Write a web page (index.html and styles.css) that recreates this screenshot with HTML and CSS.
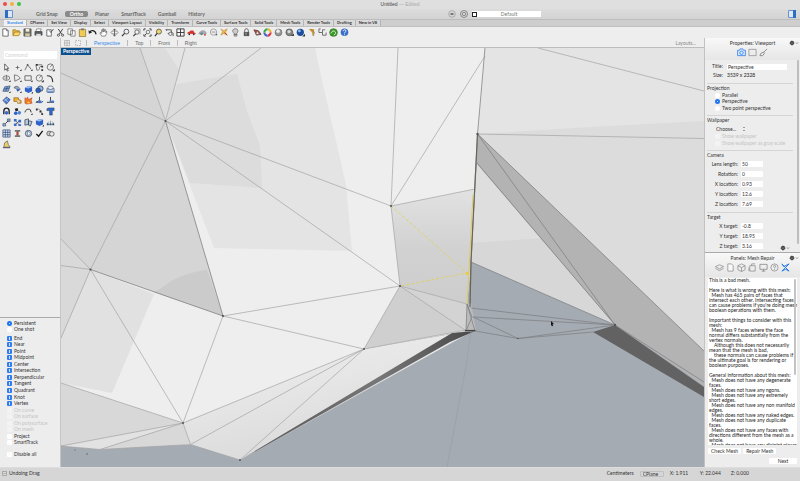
FILE: index.html
```html
<!DOCTYPE html>
<html lang="en">
<head>
<meta charset="utf-8">
<title>Untitled — Edited</title>
<link rel="stylesheet" href="styles.css">
</head>
<body>
<svg class="defs" aria-hidden="true">
  <symbol id="file" viewBox="0 0 10 10"><path d="M2 1h4l2 2v6H2z" fill="#fff" stroke="#555" stroke-width=".9"/><path d="M6 1v2h2" fill="none" stroke="#555" stroke-width=".8"/></symbol>
  <symbol id="folder" viewBox="0 0 10 10"><path d="M1 8V2h3l1 1h3v2" fill="#e9b93c" stroke="#8a6a1c" stroke-width=".7"/><path d="M1 8.500l2-4h6.500l-2 4z" fill="#ffd867" stroke="#8a6a1c" stroke-width=".7"/></symbol>
  <symbol id="save" viewBox="0 0 10 10"><path d="M1 1h8v8H1z" fill="#76736a" stroke="#444" stroke-width=".7"/><path d="M3 1h4v3H3z" fill="#f6f1dc"/><path d="M2.500 6h5v3h-5z" fill="#cfc9a8"/></symbol>
  <symbol id="print" viewBox="0 0 10 10"><path d="M3 1h5l-1 3H2z" fill="#fff" stroke="#444" stroke-width=".6"/><path d="M1 4h8v4H1z" fill="#5b5f63" stroke="#333" stroke-width=".6"/><path d="M2.500 6.500h5v2.500h-5z" fill="#ddd"/></symbol>
  <symbol id="filecheck" viewBox="0 0 10 10"><path d="M2 2h5v7H2z" fill="#fff" stroke="#555" stroke-width=".9"/><path d="M5 3l1.500 2L9.500 1" fill="none" stroke="#555" stroke-width="1"/></symbol>
  <symbol id="cut" viewBox="0 0 10 10"><path d="M2.500 1l4 6M7.500 1l-4 6" stroke="#333" fill="none"/><circle cx="2.700" cy="8" r="1.200" fill="none" stroke="#333" stroke-width=".8"/><circle cx="7.300" cy="8" r="1.200" fill="none" stroke="#333" stroke-width=".8"/></symbol>
  <symbol id="copy" viewBox="0 0 10 10"><path d="M1 1h5v6H1zM4 3h5v6H4z" fill="#fff" stroke="#666" stroke-width=".8"/></symbol>
  <symbol id="paste" viewBox="0 0 10 10"><path d="M1.500 1.500h7v8h-7z" fill="#f2cb55" stroke="#8b7838" stroke-width=".8"/><path d="M3.500.500h3v2h-3z" fill="#777"/></symbol>
  <symbol id="undo" viewBox="0 0 10 10"><path d="M2 5c1-3 6-3 7 2" fill="none" stroke="#222" stroke-width="1.300"/><path d="M.500 2.500l.500 4 3.500-1.500z" fill="#222"/></symbol>
  <symbol id="hand" viewBox="0 0 10 10"><path d="M3 9L1 5.500l1-.500 1 1V2l1-.500.500 3V1h1v3.500L6.500 1.500l1 .500v3l1-1.500V6L7 9z" fill="#fff" stroke="#555" stroke-width=".7"/></symbol>
  <symbol id="rotate" viewBox="0 0 10 10"><ellipse cx="5" cy="5" rx="4" ry="1.800" fill="none" stroke="#777" stroke-width=".8"/><path d="M5 1v8M3.500 2.500L5 1l1.500 1.500M3.500 7.500L5 9l1.500-1.500" fill="none" stroke="#444" stroke-width=".8"/></symbol>
  <symbol id="zoom" viewBox="0 0 10 10"><circle cx="6" cy="4" r="2.700" fill="#e8eef5" stroke="#444" stroke-width=".9"/><path d="M4 6L1 9" stroke="#333" stroke-width="1.300"/></symbol>
  <symbol id="zoomwin" viewBox="0 0 10 10"><path d="M2 1h7v6" fill="none" stroke="#777" stroke-width=".7"/><circle cx="5.500" cy="4.500" r="2.400" fill="#f3f3f3" stroke="#444" stroke-width=".8"/><path d="M4 6.500L1.500 9" stroke="#333" stroke-width="1.200"/></symbol>
  <symbol id="zoomext" viewBox="0 0 10 10"><path d="M1 3V1h2M7 1h2v2M9 7v2H7M3 9H1V7" fill="none" stroke="#333" stroke-width="1"/><circle cx="5.500" cy="4.500" r="2" fill="#eee" stroke="#555" stroke-width=".8"/><path d="M4 6L2 8" stroke="#333"/></symbol>
  <symbol id="zoomsel" viewBox="0 0 10 10"><circle cx="5.500" cy="4" r="2.800" fill="#eed56a" stroke="#555" stroke-width=".9"/><path d="M3.500 6L1 9" stroke="#333" stroke-width="1.300"/></symbol>
  <symbol id="viewback" viewBox="0 0 10 10"><path d="M1 2h6v4H3M7 4l2 2v3M1 2l1-1M1 2l1 1" fill="none" stroke="#444" stroke-width=".9"/><circle cx="6" cy="6.500" r="1.800" fill="#eee" stroke="#444" stroke-width=".7"/></symbol>
  <symbol id="views" viewBox="0 0 10 10"><path d="M1 1h8v8H1zM5 1v8M1 5h8" fill="#f7f7f7" stroke="#333" stroke-width="1"/></symbol>
  <symbol id="carred" viewBox="0 0 10 10"><path d="M.500 6.500V5L3 4l1-1.200h3L8 5l1.500.500v1.200z" fill="#d7332d"/><circle cx="2.500" cy="7" r="1" fill="#333"/><circle cx="7.500" cy="7" r="1" fill="#333"/></symbol>
  <symbol id="car" viewBox="0 0 10 10"><path d="M1 5.500l3-2.500h3l2 2v1.500H1z" fill="#aab" stroke="#888" stroke-width=".5"/><circle cx="4" cy="6.500" r="1.600" fill="#678c78"/><circle cx="7.700" cy="7.500" r="1" fill="#b44"/></symbol>
  <symbol id="circle" viewBox="0 0 10 10"><circle cx="5" cy="4.500" r="3.500" fill="#eee" stroke="#888" stroke-width=".8"/><path d="M3 4.500h4" stroke="#777" stroke-width=".8"/><path d="M7 8h2V6z" fill="#444"/></symbol>
  <symbol id="spark" viewBox="0 0 10 10"><path d="M1 1l3 2 4-2-2 4 2 3-4-2-3 2 2-4z" fill="#f0c23d" stroke="#a6702d" stroke-width=".5"/><path d="M5 5l3 3" stroke="#c33"/></symbol>
  <symbol id="bulb" viewBox="0 0 10 10"><path d="M3.500 6C0 3 3 .500 5 .800 8 1 8.500 3.500 6.500 6v3h-3z" fill="#ccc" stroke="#666" stroke-width=".8"/><path d="M3.500 7h3" stroke="#555"/></symbol>
  <symbol id="lock" viewBox="0 0 10 10"><path d="M3 5V3c0-3 4-3 4 0v2" fill="none" stroke="#555"/><path d="M2 4.500h6V9H2z" fill="#555"/><path d="M4 5h1v3H4z" fill="#aaa"/></symbol>
  <symbol id="layer" viewBox="0 0 10 10"><path d="M1 2l5 1 3 4-5 1z" fill="#d44335" stroke="#333" stroke-width=".7"/><path d="M3 7l2-4 2 4z" fill="#eee" stroke="#444" stroke-width=".5"/></symbol>
  <symbol id="wheel" viewBox="0 0 10 10"><g fill="none" stroke-width="2.200"><path d="M5 1.500A3.500 3.500 0 0 1 8.500 5" stroke="#f0b32c"/><path d="M8.500 5A3.500 3.500 0 0 1 5 8.500" stroke="#d34"/><path d="M5 8.500A3.500 3.500 0 0 1 1.500 5" stroke="#46c"/><path d="M1.500 5A3.500 3.500 0 0 1 5 1.500" stroke="#3a5"/></g></symbol>
  <symbol id="sphere" viewBox="0 0 10 10"><circle cx="5" cy="5" r="3.800" fill="#999" stroke="#555" stroke-width=".6"/><circle cx="4.500" cy="3.500" r="2" fill="#eee"/></symbol>
  <symbol id="sphered" viewBox="0 0 10 10"><circle cx="4.800" cy="4.800" r="3.800" fill="#888" stroke="#444" stroke-width=".7"/><circle cx="4.500" cy="4" r="1.800" fill="#ddd"/><path d="M6 9h4V6z" fill="#444"/></symbol>
  <symbol id="sphereb" viewBox="0 0 10 10"><circle cx="4.800" cy="4.800" r="4" fill="#1d4d9e"/><circle cx="3.800" cy="3.200" r="1.500" fill="#8fc0ee"/><path d="M7 9.500h3V6.500z" fill="#333"/></symbol>
  <symbol id="flag" viewBox="0 0 10 10"><path d="M2 1h6v4L6 9l-.500-4z" fill="#d9a03a"/><path d="M4 1l4 4-1 4" fill="none" stroke="#665" stroke-width=".8"/></symbol>
  <symbol id="dims" viewBox="0 0 10 10"><path d="M1 1v4h4V2h3M5 5v3h4V5M1 1h2" fill="none" stroke="#555" stroke-width=".9"/></symbol>
  <symbol id="green" viewBox="0 0 10 10"><circle cx="5" cy="5" r="4.300" fill="#3c9b2b" stroke="#26601c" stroke-width=".6"/><path d="M2 6c2-4 5-3 5.500 0l-2 2" fill="none" stroke="#e9f6dc" stroke-width="1"/></symbol>
  <symbol id="help" viewBox="0 0 10 10"><circle cx="5" cy="4.800" r="4.200" fill="#3b6fc9"/><path d="M3.500 3.500c0-2 3.500-2 3 0C6.500 4.500 5 4.500 5 6M5 7v1" fill="none" stroke="#fff" stroke-width="1"/></symbol>

  <symbol id="arrow" viewBox="0 0 10 10"><path d="M3 1v7l1.500-1.500L6 9l1-.500L5.500 6h2z" fill="#fff" stroke="#333" stroke-width=".8"/></symbol>
  <symbol id="point" viewBox="0 0 10 10"><path d="M3 5h4M5 3v4" stroke="#555" stroke-width=".8"/><path d="M7.500 9h2V7z" fill="#222"/></symbol>
  <symbol id="poly" viewBox="0 0 10 10"><path d="M1 8l3-6 4 5" fill="none" stroke="#444" stroke-width=".8"/><circle cx="4" cy="2" r="1" fill="#555"/><path d="M7.500 9h2V7z" fill="#222"/></symbol>
  <symbol id="curve" viewBox="0 0 10 10"><path d="M1 2h7M2 8c6 0 0-5 6-4M1 2l1 6" fill="none" stroke="#555" stroke-width=".8"/><path d="M1 1h2v2H1zM7 3h2v2H7zM7 7h2v2H7z" fill="#333"/></symbol>
  <symbol id="circ" viewBox="0 0 10 10"><circle cx="4.800" cy="4.500" r="3.500" fill="none" stroke="#555" stroke-width=".8"/><path d="M4.500 4.500l3-3M7.500 9h2V7z" fill="#222" stroke="#444" stroke-width=".6"/></symbol>
  <symbol id="ellipse" viewBox="0 0 10 10"><ellipse cx="4.800" cy="4.500" rx="3.800" ry="2.500" fill="none" stroke="#555" stroke-width=".8"/><path d="M2.500 4.500h4M5 1v6" stroke="#555" stroke-width=".6"/><path d="M7.500 9h2V7z" fill="#222"/></symbol>
  <symbol id="arc" viewBox="0 0 10 10"><path d="M2 8l-.500-7C5 1 8 4 8 5L2 8" fill="none" stroke="#555" stroke-width=".8"/><path d="M7.500 9h2V7z" fill="#222"/></symbol>
  <symbol id="rect" viewBox="0 0 10 10"><path d="M1 2h7v5H1z" fill="none" stroke="#555" stroke-width=".9"/><path d="M7.500 9h2V7z" fill="#222"/></symbol>
  <symbol id="fillet" viewBox="0 0 10 10"><path d="M1 2c4 0 6 1 6.500 7" fill="none" stroke="#333" stroke-width="1.200"/></symbol>
  <symbol id="surf" viewBox="0 0 10 10"><path d="M1 7l2-5 6-1-2 6z" fill="#7ea6e6" stroke="#345" stroke-width=".7"/><path d="M2 4.500l6-1M4 7l2-5" stroke="#235" stroke-width=".6"/><path d="M7.500 9h2V7z" fill="#222"/></symbol>
  <symbol id="rev" viewBox="0 0 10 10"><path d="M1 3c3-3 6-1 7 2L5 7C5 5 4 4 1 3z" fill="#9ab" stroke="#456" stroke-width=".7"/><circle cx="5.500" cy="5.500" r="1.300" fill="#36c"/><path d="M7.500 9h2V7z" fill="#222"/></symbol>
  <symbol id="box" viewBox="0 0 10 10"><path d="M1 3l4-2 4 1v5L5 9 1 7z" fill="#2f62c9"/><path d="M1 3l4-2 4 1-4 2z" fill="#9bbcf2"/><path d="M8 9.500h2v-2z" fill="#222"/></symbol>
  <symbol id="spheres" viewBox="0 0 10 10"><circle cx="6" cy="4" r="3" fill="#8eb2ec" stroke="#234" stroke-width=".8"/><circle cx="3.500" cy="6" r="2.700" fill="#2d5dbd" stroke="#234" stroke-width=".6"/></symbol>
  <symbol id="cyl" viewBox="0 0 10 10"><path d="M1 4h8v4H1z" fill="#b9cdec" stroke="#456" stroke-width=".7"/><ellipse cx="5" cy="3" rx="3" ry="2" fill="#e4ecf9" stroke="#456" stroke-width=".7"/><path d="M2 8h6" stroke="#36b"/></symbol>
  <symbol id="plane" viewBox="0 0 10 10"><path d="M1 5l4-4 4 3-4 5z" fill="#4c7fd8" stroke="#235" stroke-width=".7"/><path d="M2 6l5-4M3 3l4 4" stroke="#cde" stroke-width=".7"/></symbol>
  <symbol id="puzzle" viewBox="0 0 10 10"><path d="M1 2h5v2l3 1v3H5V6L1 6z" fill="#f5b32e" stroke="#7b571a" stroke-width=".7"/><circle cx="6" cy="6" r="1.300" fill="#ddd"/></symbol>
  <symbol id="burst" viewBox="0 0 10 10"><path d="M1 2l2 1 1-2 1 3 4-2-1 3 1 3-3 .500L3 9 1 8z" fill="#ee7b22" stroke="#a33" stroke-width=".5"/><path d="M3 8l2-2 2 2z" fill="#ffd35c"/></symbol>
  <symbol id="trim" viewBox="0 0 10 10"><path d="M5 1v4L1 7h6l2-1" fill="none" stroke="#345" stroke-width="1"/><path d="M4 5h3v3H4z" fill="#3c70ce"/></symbol>
  <symbol id="split" viewBox="0 0 10 10"><path d="M5 1v5M1 7h8" stroke="#333"/><path d="M4 5h5v2H4z" fill="#477dce"/></symbol>
  <symbol id="join" viewBox="0 0 10 10"><path d="M2 8V5c0-5 6-5 6 0v3" fill="none" stroke="#222" stroke-width="1.500"/><circle cx="5" cy="6.500" r="2" fill="#3669c9"/></symbol>
  <symbol id="group" viewBox="0 0 10 10"><path d="M2 2l3-1 1 3-3 1z" fill="#222"/><circle cx="3" cy="7" r="2" fill="#2d61c4"/><circle cx="7" cy="6.500" r="2" fill="#4b83df"/></symbol>
  <symbol id="bend" viewBox="0 0 10 10"><path d="M1 6c1-4 4-4 6-3l1 3" fill="none" stroke="#333" stroke-width="1.100"/><path d="M7.500 9h2V7z" fill="#222"/></symbol>
  <symbol id="offset" viewBox="0 0 10 10"><path d="M1 2c5 0 6 2 7 6" fill="none" stroke="#888"/><path d="M1 2h2v2H1zM5 4h2v2H5zM7 7h2v2H7z" fill="#333"/></symbol>
  <symbol id="textt" viewBox="0 0 10 10"><path d="M1 2l2-1h6v3H7v5H4V4H1z" fill="#2f68cf" stroke="#234" stroke-width=".5"/></symbol>
  <symbol id="move" viewBox="0 0 10 10"><path d="M1 6h3v3H1zM6 1h3v3H6z" fill="#88a6d6" stroke="#345" stroke-width=".6"/><path d="M4 6l3-3" stroke="#333"/></symbol>
  <symbol id="array" viewBox="0 0 10 10"><path d="M1 1h3v3H1zM6 2h3v3H6zM1 6h3v3H1zM6 7h3v2H6z" fill="#3b6cc8"/><path d="M3 3l4 5M7 3L3 7" stroke="#345" stroke-width=".7"/></symbol>
  <symbol id="cubes" viewBox="0 0 10 10"><path d="M1 2l4-1v6L1 8zM5 3l4 1-2 5-2-1z" fill="#b9c7da" stroke="#345" stroke-width=".8"/></symbol>
  <symbol id="dots" viewBox="0 0 10 10"><path d="M1 7h8M1 7l2-3M5 7V3M9 7L7 4" stroke="#678" stroke-width=".7"/><path d="M1 6h2v2H1zM4 6h2v2H4zM7 6h2v2H7z" fill="#357"/></symbol>
  <symbol id="gridi" viewBox="0 0 10 10"><path d="M1 1h8v8H1zM3.700 1v8M6.400 1v8M1 3.700h8M1 6.400h8" fill="#d8e3f5" stroke="#334b78" stroke-width=".8"/></symbol>
  <symbol id="beam" viewBox="0 0 10 10"><path d="M2 1h6v2H6v4h2v2H2V7h2V3H2z" fill="#777"/><path d="M4 3h2v4H4z" fill="#b8463b"/></symbol>
  <symbol id="ring" viewBox="0 0 10 10"><circle cx="5" cy="5" r="3.500" fill="#b9cbe6" stroke="#345" stroke-width=".8"/><path d="M4 2v6l3-3z" fill="#fff" stroke="#345" stroke-width=".5"/></symbol>
  <symbol id="check" viewBox="0 0 10 10"><path d="M1.500 5.500L4 8l4.500-6" fill="none" stroke="#111" stroke-width="1.400"/></symbol>
  <symbol id="shells" viewBox="0 0 10 10"><circle cx="3.500" cy="5" r="2.600" fill="#ccc" stroke="#444" stroke-width=".8"/><circle cx="6.500" cy="5.500" r="2.500" fill="#eee" stroke="#444" stroke-width=".8"/></symbol>
  <symbol id="rhino" viewBox="0 0 10 10"><path d="M2 8l1-5 3-2 1 4 2 3z" fill="#ead06a" stroke="#555" stroke-width=".7"/><path d="M1 8.500h8" stroke="#557" stroke-width="1.200"/></symbol>

  <symbol id="camera" viewBox="0 0 10 10"><path d="M.700 2.500h2L3.500 1h3l.800 1.500h2v6H.700z" fill="#dcebff" stroke="#2d7be5" stroke-width=".9"/><circle cx="5" cy="5.300" r="1.900" fill="none" stroke="#2d7be5" stroke-width=".9"/></symbol>
  <symbol id="frame" viewBox="0 0 10 10"><path d="M1 1.500h8v7H1z" fill="none" stroke="#8a8a8a" stroke-width=".8"/></symbol>
  <symbol id="brush" viewBox="0 0 10 10"><path d="M9 1L5 5M2 6l3-1.500L6 6 4 8.500H1z" fill="none" stroke="#888" stroke-width="1"/></symbol>
  <symbol id="layers" viewBox="0 0 10 10"><path d="M.500 4L5 2l4.500 2L5 6.500zM.500 6L5 8.500 9.500 6" fill="none" stroke="#888" stroke-width=".8"/></symbol>
  <symbol id="page" viewBox="0 0 10 10"><path d="M2 1h4l2 2v6H2z" fill="#f8f8f8" stroke="#888" stroke-width=".8"/></symbol>
  <symbol id="cube" viewBox="0 0 10 10"><path d="M1 3l4-2 4 2v4.500l-4 2-4-2zM1 3l4 2 4-2M5 5v4.500" fill="none" stroke="#888" stroke-width=".8"/></symbol>
  <symbol id="stack" viewBox="0 0 10 10"><path d="M2 3h6v6H2zM4 3V1h4M1 9V5" fill="none" stroke="#888" stroke-width=".8"/></symbol>
  <symbol id="monitor" viewBox="0 0 10 10"><path d="M1 1.500h8v5.500H1zM3 9h4M5 7v2" fill="none" stroke="#888" stroke-width=".9"/></symbol>
  <symbol id="qmark" viewBox="0 0 10 10"><circle cx="5" cy="5" r="4" fill="none" stroke="#888" stroke-width=".8"/><path d="M3.800 4c0-2 2.800-1.500 2.400 0L5 5.500v.500M5 7v.800" fill="none" stroke="#777" stroke-width=".8"/></symbol>
  <symbol id="mesh" viewBox="0 0 10 10"><path d="M1 1l8 8M9 1L1 9M1 1l2 3 6-3M1 9l4-2 4 2" fill="none" stroke="#2d7be5" stroke-width="1.100"/></symbol>
  <symbol id="gear" viewBox="0 0 10 6"><circle cx="3" cy="3" r="1.900" fill="#333" stroke="#333" stroke-width="1" stroke-dasharray=".8 .7"/><circle cx="3" cy="3" r=".6" fill="#eee"/><path d="M7 2.500l1 1 1-1" fill="none" stroke="#555" stroke-width=".7"/></symbol>
</svg>

<header class="titlebar">
  <div class="lights"><i class="red"></i><i class="amber"></i><i class="green"></i></div>
  <h1>Untitled <span>— Edited</span></h1>
</header>
<div class="modes">
  <button class="side" aria-label="Left sidebar"><svg viewBox="0 0 8 8"><path d="M.500.500h7v7h-7z" fill="#dce8f8" stroke="#6c93c8"/><path d="M0 0h3v8H0z" fill="#2b6fc4"/></svg></button>
  <nav class="modelist">
    <button>Grid Snap</button><button class="on">Ortho</button><button>Planar</button><button>SmartTrack</button><button>Gumball</button><button>History</button>
  </nav>
  <div class="layerbar">
    <svg class="ring" viewBox="0 0 8 8"><circle cx="4" cy="4" r="3.300" fill="none" stroke="#999" stroke-width=".7"/><path d="M2.500 3h3v2h-3z" fill="#777"/></svg>
    <svg class="ring" viewBox="0 0 8 8"><circle cx="4" cy="4" r="3.500" fill="none" stroke="#777" stroke-width=".8"/><circle cx="4" cy="4" r="1.700" fill="none" stroke="#777" stroke-width=".8"/></svg>
    <div class="layersel"><i></i><select aria-label="Layer"><option>Default</option></select></div>
  </div>
  <button class="side" aria-label="Right sidebar"><svg viewBox="0 0 8 8"><path d="M.500.500h7v7h-7z" fill="#dce8f8" stroke="#6c93c8"/><path d="M5 0h3v8H5z" fill="#2b6fc4"/></svg></button>
</div>
<nav class="tabs">
  <button class="on">Standard</button><button>CPlanes</button><button>Set View</button><button>Display</button><button>Select</button><button>Viewport Layout</button><button>Visibility</button><button>Transform</button><button>Curve Tools</button><button>Surface Tools</button><button>Solid Tools</button><button>Mesh Tools</button><button>Render Tools</button><button>Drafting</button><button>New in V8</button>
</nav>
<div class="tools">
  <div class="toolrow">
    <button aria-label="New"><svg><use href="#file"/></svg></button>
    <button aria-label="Open"><svg><use href="#folder"/></svg></button>
    <button aria-label="Save"><svg><use href="#save"/></svg></button>
    <button aria-label="Print"><svg><use href="#print"/></svg></button>
    <button aria-label="Document properties"><svg><use href="#filecheck"/></svg></button>
    <button aria-label="Cut"><svg><use href="#cut"/></svg></button>
    <button aria-label="Copy"><svg><use href="#copy"/></svg></button>
    <button aria-label="Paste"><svg><use href="#paste"/></svg></button>
    <button aria-label="Undo"><svg><use href="#undo"/></svg></button>
    <button aria-label="Pan"><svg><use href="#hand"/></svg></button>
    <button aria-label="Rotate view"><svg><use href="#rotate"/></svg></button>
    <button aria-label="Zoom"><svg><use href="#zoom"/></svg></button>
    <button aria-label="Zoom window"><svg><use href="#zoomwin"/></svg></button>
    <button aria-label="Zoom extents"><svg><use href="#zoomext"/></svg></button>
    <button aria-label="Zoom selected"><svg><use href="#zoomsel"/></svg></button>
    <button aria-label="Undo view"><svg><use href="#viewback"/></svg></button>
    <button aria-label="Viewports"><svg><use href="#views"/></svg></button>
    <button aria-label="Right view"><svg><use href="#carred"/></svg></button>
    <button aria-label="Named view"><svg><use href="#car"/></svg></button>
    <button aria-label="Construction plane"><svg><use href="#circle"/></svg></button>
    <button aria-label="Object snap"><svg><use href="#spark"/></svg></button>
    <button aria-label="Hide"><svg><use href="#bulb"/></svg></button>
    <button aria-label="Lock"><svg><use href="#lock"/></svg></button>
    <button aria-label="Layers"><svg><use href="#layer"/></svg></button>
    <button aria-label="Colors"><svg><use href="#wheel"/></svg></button>
    <button aria-label="Shade"><svg><use href="#sphere"/></svg></button>
    <button aria-label="Shaded viewport"><svg><use href="#sphered"/></svg></button>
    <button aria-label="Render"><svg><use href="#sphereb"/></svg></button>
    <button aria-label="Spotlight"><svg><use href="#flag"/></svg></button>
    <button aria-label="Dimension"><svg><use href="#dims"/></svg></button>
    <button aria-label="Grasshopper"><svg><use href="#green"/></svg></button>
    <button aria-label="Help"><svg><use href="#help"/></svg></button>
  </div>
</div>

<main>
  <aside class="left">
    <input class="command" type="text" placeholder="Command" aria-label="Command">
    <div class="palette">
      <button aria-label="Select"><svg><use href="#arrow"/></svg></button><button aria-label="Point"><svg><use href="#point"/></svg></button><button aria-label="Polyline"><svg><use href="#poly"/></svg></button><button aria-label="Curve"><svg><use href="#curve"/></svg></button><button aria-label="Circle"><svg><use href="#circ"/></svg></button>
      <button aria-label="Ellipse"><svg><use href="#ellipse"/></svg></button><button aria-label="Arc"><svg><use href="#arc"/></svg></button><button aria-label="Rectangle"><svg><use href="#rect"/></svg></button><button aria-label="Polygon"><svg><use href="#circ"/></svg></button><button aria-label="Fillet"><svg><use href="#fillet"/></svg></button>
      <button aria-label="Surface"><svg><use href="#surf"/></svg></button><button aria-label="Revolve"><svg><use href="#rev"/></svg></button><button aria-label="Box"><svg><use href="#box"/></svg></button><button aria-label="Boolean"><svg><use href="#spheres"/></svg></button><button aria-label="Cylinder"><svg><use href="#cyl"/></svg></button>
      <button aria-label="Mesh plane"><svg><use href="#plane"/></svg></button><button aria-label="Join"><svg><use href="#puzzle"/></svg></button><button aria-label="Explode"><svg><use href="#burst"/></svg></button><button aria-label="Trim"><svg><use href="#trim"/></svg></button><button aria-label="Split"><svg><use href="#split"/></svg></button>
      <button aria-label="Group"><svg><use href="#join"/></svg></button><button aria-label="Ungroup"><svg><use href="#group"/></svg></button><button aria-label="Bend"><svg><use href="#bend"/></svg></button><button aria-label="Edit points"><svg><use href="#offset"/></svg></button><button aria-label="Text"><svg><use href="#textt"/></svg></button>
      <button aria-label="Move"><svg><use href="#move"/></svg></button><button aria-label="Array"><svg><use href="#array"/></svg></button><button aria-label="Rotate"><svg><use href="#cubes"/></svg></button><button aria-label="Scale"><svg><use href="#box"/></svg></button><button aria-label="Align"><svg><use href="#dots"/></svg></button>
      <button aria-label="Grid"><svg><use href="#gridi"/></svg></button><button aria-label="Section"><svg><use href="#beam"/></svg></button><button aria-label="Block"><svg><use href="#ring"/></svg></button><button aria-label="Check"><svg><use href="#check"/></svg></button><button aria-label="Shell"><svg><use href="#shells"/></svg></button>
      <button aria-label="Rhino"><svg><use href="#rhino"/></svg></button>
    </div>
    <form class="osnap">
      <div class="pair">
        <label><input type="radio" name="snap" checked>Persistent</label>
        <label><input type="radio" name="snap">One shot</label>
      </div>
      <div class="snaps">
        <label><input type="checkbox" checked>End</label>
        <label><input type="checkbox" checked>Near</label>
        <label><input type="checkbox" checked>Point</label>
        <label><input type="checkbox" checked>Midpoint</label>
        <label><input type="checkbox" checked>Center</label>
        <label><input type="checkbox" checked>Intersection</label>
        <label><input type="checkbox" checked>Perpendicular</label>
        <label><input type="checkbox" checked>Tangent</label>
        <label><input type="checkbox" checked>Quadrant</label>
        <label><input type="checkbox" checked>Knot</label>
        <label><input type="checkbox" checked>Vertex</label>
        <label class="off"><input type="checkbox" disabled>On curve</label>
        <label class="off"><input type="checkbox" disabled>On surface</label>
        <label class="off"><input type="checkbox" disabled>On polysurface</label>
        <label class="off"><input type="checkbox" disabled>On mesh</label>
        <label><input type="checkbox">Project</label>
        <label><input type="checkbox">SmartTrack</label>
      </div>
      <label><input type="checkbox">Disable all</label>
    </form>
  </aside>

  <section class="center">
    <nav class="views">
      <svg viewBox="0 0 6 6"><path d="M.500.500h5v5h-5zM3 0v6M0 3h6" fill="none" stroke="#aaa" stroke-width=".7"/></svg>
      <svg viewBox="0 0 6 6"><path d="M.500.500h5v5h-5z" fill="none" stroke="#aaa" stroke-width=".8" stroke-dasharray="1.500 1"/></svg>
      <button class="on">Perspective</button><button>Top</button><button>Front</button><button>Right</button>
      <button class="layouts">Layouts...</button>
    </nav>
    <div class="viewport">
      <svg class="scene" viewBox="61 48 643 419" preserveAspectRatio="xMidYMid slice" role="img" aria-label="Mesh model">
        <defs>
          <linearGradient id="quad" x1="0" y1="0" x2="0" y2="1"><stop offset="0" stop-color="#e2e2e2"/><stop offset=".5" stop-color="#d2d2d2"/><stop offset="1" stop-color="#cdcdcd"/></linearGradient>
          <linearGradient id="under" x1="0" y1="0" x2=".5" y2="1"><stop offset="0" stop-color="#efefef"/><stop offset=".5" stop-color="#e6e6e6"/><stop offset="1" stop-color="#d8d8d8"/></linearGradient>
          <linearGradient id="edge" gradientUnits="userSpaceOnUse" x1="240" y1="460" x2="475" y2="331"><stop offset="0" stop-color="#555"/><stop offset=".6" stop-color="#777"/><stop offset="1" stop-color="#4a4a4a"/></linearGradient>
        </defs>
        <path fill="#a5abb3" d="M61 48h643v419H61z"/>
        <path fill="#eee" d="M61 48h424l-7 86-7 128-4 42-1 27-101 18-174 96-130 1z"/>
        <path fill="#e4e4e4" d="M160 48h155l8 37 14 60 9 40 6 66-138-3-49-127z"/>
        <path fill="#dcdcdc" d="M165.500 121L177 84l60-10 10 37 13 35 2 42-72-5z"/>
        <path fill="#d5d5d5" d="M61 48h79l25.500 73L223 316 90.500 269.500 61 265z"/>
        <path fill="#dcdcdc" d="M140 48h25l14 22-13.500 51z"/>
        <path fill="#cbcbcb" d="M160 289c12-10 25-16 47-19l16 46-70-24z"/>
        <path fill="#e1e1e1" d="M61 239l29.500 30.500L154 294l-42 99-51-10z"/>
        <path fill="#d9d9d9" d="M61 239l29.500 30.500L61 338z"/>
        <path fill="#d8d8d8" d="M61 383l122 40 7.500 21.500-90.500 5-39-3.500z"/>
        <path fill="#e2e2e2" d="M61 446l122-23-83 26z"/>
        <path fill="url(#under)" d="M183 423l181-74 111-19-235 130-49.500-15.500z"/>
        <path fill="#cfcfcf" d="M400 286l66 44-102 19z"/>
        <path fill="url(#quad)" d="M391 206l84-17-4 73-4 42-67-18z"/>
        <path fill="#d3d3d3" d="M400 286l67 18-1 27z"/>
        <path fill="#e4e4e4" d="M485 48h219v90.500L477.500 134z"/>
        <path fill="#dcdcdc" d="M477.500 134L590 127l114-6v231z"/>
        <path fill="#d7d7d7" d="M477 163l138 162-144-63z"/>
        <path fill="#dedede" d="M477 163l67 75-72 5z"/>
        <path fill="#b3b3b3" d="M477.500 134L704 351v35l-89-61-138-161z"/>
        <path fill="#626262" d="M615 325l89 62v10l-111-65z"/>
        <path fill="url(#edge)" d="M240 460L452 333l23-2-25 11z"/>
        <path fill="#bbb" d="M467 304l4-2 5 29-10 0z"/>
        <g fill="none" stroke="#a3a4a5" stroke-width=".7">
          <path d="M140 48l25.500 73L185 48M261 48l-95.500 73L61 73M90.500 269.500l75-148.500L391 206M165.500 121L400 286"/>
          <path d="M61 239l29.500 30.500L61 265.500M61 338l29.500-68.500L183 423 61 383M61 446l122-23-83 26.500M183 423l7.500 21.500"/>
          <path d="M183 423l40-107 141 33zM223 316l177-30-36 63 102-19M190.500 444.500L364 349 240 460"/>
          <path d="M398 48l-7 158 94-150M391 206l84-17M391 206l9 80 67 18M400 286l65 44"/>
          <path d="M538 48l166 43M477.500 134l226.500 4.500M61 446l39 3.500 90.500-5L240 460"/>
        </g>
        <g fill="none" stroke="#808387" stroke-width=".8">
          <path d="M165.500 121L223 316 90.500 269.500M477.500 134L704 351M477.500 134L615 325 477 163M471 262l144 63 89 57"/>
          <path d="M471 308l144 17-142-8 45 21.500 97-13.500M475 331l43 7.500 75-6.500M467 304l5 13-6 14 1-27 8 27h-10"/>
          <path d="M485 48l-7.500 86-6.500 128-1 42" stroke="#888"/>
        </g>
        <path d="M477.500 134l-6.500 128-1 45" fill="none" stroke="#68655c" stroke-width="1.200"/>
        <path d="M473 195l-4 75-2 34" fill="none" stroke="#d8cb62" stroke-width="1"/>
        <path d="M391 206l76 67-67 13" fill="none" stroke="#e2cf4b" stroke-width=".8" stroke-dasharray="3 2"/>
        <path d="M465 330.500h10.500" stroke="#444" stroke-width="1.200"/>
        <path d="M471 331c-1 11-3 17-4 30l-20 106" fill="none" stroke="#959ba2" stroke-width=".5"/>
        <circle cx="467" cy="273.500" r="1.600" fill="#e9cd3c"/>
        <g fill="#555"><circle cx="165.500" cy="121" r="1.100"/><circle cx="90.500" cy="269.500" r="1.100"/><circle cx="223" cy="316" r="1.100"/><circle cx="364" cy="349" r="1"/><circle cx="391" cy="206" r="1.100"/><circle cx="400" cy="286" r="1.100"/><circle cx="477.500" cy="134" r="1.200"/><circle cx="615" cy="325" r="1.200"/><circle cx="183" cy="423" r="1"/><circle cx="240" cy="460" r="1"/><circle cx="518" cy="338.500" r=".8"/><circle cx="87" cy="454" r=".7"/><circle cx="75" cy="450" r=".6"/></g>
        <path d="M551 321l3 3-1.500.300.500 1.700-1 .300-1-1.500z" fill="#111"/>
      </svg>
      <span class="badge">Perspective</span>
    </div>
  </section>

  <aside class="right">
    <section class="props">
      <div class="phead">
        <h2>Properties: Viewport</h2>
        <button class="gear" aria-label="Panel options"><svg><use href="#gear"/></svg></button>
        <div class="picons"><button aria-label="Viewport"><svg><use href="#camera"/></svg></button><button aria-label="Frame"><svg><use href="#frame"/></svg></button><button aria-label="Material"><svg><use href="#brush"/></svg></button></div>
      </div>
      <form class="scroll">
        <fieldset class="first">
          <label class="row short"><span>Title:</span><input class="wide" type="text" value="Perspective"></label>
          <div class="row short"><span>Size:</span><b>3539 x 2328</b></div>
        </fieldset>
        <fieldset>
          <h3>Projection</h3>
          <div class="radios">
            <label><input type="radio" name="proj">Parallel</label>
            <label><input type="radio" name="proj" checked>Perspective</label>
            <label><input type="radio" name="proj">Two point perspective</label>
          </div>
        </fieldset>
        <fieldset>
          <h3>Wallpaper</h3>
          <div class="choose"><select aria-label="Wallpaper"><option>Choose...</option></select><svg viewBox="0 0 4 6"><path d="M1 2l1-1 1 1M1 4l1 1 1-1" fill="none" stroke="#777" stroke-width=".7"/></svg></div>
          <div class="checks">
            <label class="off"><input type="checkbox" disabled>Show wallpaper</label>
            <label class="off"><input type="checkbox" disabled>Show wallpaper as gray scale</label>
          </div>
        </fieldset>
        <fieldset>
          <h3>Camera</h3>
          <label class="row"><span>Lens length:</span><input type="text" value="50"></label>
          <label class="row"><span>Rotation:</span><input type="text" value="0"></label>
          <label class="row"><span>X location:</span><input type="text" value="0.93"></label>
          <label class="row"><span>Y location:</span><input type="text" value="12.6"></label>
          <label class="row"><span>Z location:</span><input type="text" value="7.69"></label>
        </fieldset>
        <fieldset>
          <h3>Target</h3>
          <label class="row"><span>X target:</span><input type="text" value="-0.8"></label>
          <label class="row"><span>Y target:</span><input type="text" value="18.95"></label>
          <label class="row"><span>Z target:</span><input type="text" value="3.16"></label>
        </fieldset>
      </form>
      <i class="bar"></i>
      <button class="gear low" aria-label="Target options"><svg><use href="#gear"/></svg></button>
    </section>
    <section class="repair">
      <div class="phead">
        <h2>Panels: Mesh Repair</h2>
        <button class="gear" aria-label="Panel options"><svg><use href="#gear"/></svg></button>
        <div class="picons"><button aria-label="Layers"><svg><use href="#layers"/></svg></button><button aria-label="Notes"><svg><use href="#page"/></svg></button><button aria-label="Blocks"><svg><use href="#cube"/></svg></button><button aria-label="Libraries"><svg><use href="#stack"/></svg></button><button aria-label="Display"><svg><use href="#monitor"/></svg></button><button aria-label="Help"><svg><use href="#qmark"/></svg></button><button aria-label="Mesh repair"><svg><use href="#mesh"/></svg></button></div>
      </div>
      <div class="report">
        <textarea readonly aria-label="Mesh report">This is a bad mesh.

Here is what is wrong with this mesh:
  Mesh has 465 pairs of faces that
intersect each other. Intersecting faces
can cause problems if you're doing mesh
boolean operations with them.

Important things to consider with this
mesh:
  Mesh has 9 faces where the face
normal differs substantially from the
vertex normals.
    Although this does not necessarily
mean that the mesh is bad,
    these normals can cause problems if
the ultimate goal is for rendering or
boolean purposes.

General information about this mesh:
  Mesh does not have any degenerate
faces.
  Mesh does not have any ngons.
  Mesh does not have any extremely
short edges.
  Mesh does not have any non manifold
edges.
  Mesh does not have any naked edges.
  Mesh does not have any duplicate
faces.
  Mesh does not have any faces with
directions different from the mesh as a
whole.
  Mesh does not have any disjoint pieces.</textarea>
        <i class="bar"></i>
      </div>
      <div class="actions"><button>Check Mesh</button><button>Repair Mesh</button></div>
      <button class="next">Next</button>
    </section>
  </aside>
</main>

<footer>
  <svg viewBox="0 0 5 5"><path d="M.500.500h4v4h-4z" fill="#ddd" stroke="#888" stroke-width=".6"/><path d="M1.500 2.500h2" stroke="#777" stroke-width=".6"/></svg>
  <span>Undoing Drag</span>
  <div class="coords">
    <span>Centimeters</span>
    <select aria-label="Coordinate system"><option>CPlane</option></select>
    <span class="x">X: 1.911</span><span class="y">Y: 22.044</span><span>Z: 0.000</span>
  </div>
</footer>
</body>
</html>
```
FILE: styles.css
```css
* { box-sizing: border-box; margin: 0; padding: 0; }

body {
  display: flex;
  flex-direction: column;
  height: 100vh;
  overflow: hidden;
  background: #ededed;
  color: #333;
  font: 5px/5px Lato, sans-serif;
}

.defs { position: absolute; width: 0; height: 0; }
button, input, select, textarea { font: inherit; color: inherit; border: 0; background: none; appearance: none; outline: 0; }
svg { display: block; }
h1, h2, h3 { font: inherit; }
fieldset { border: 0; min-width: 0; }

.titlebar { position: relative; height: 9px; background: #dfdfdf; }
.lights { position: absolute; left: 3px; top: 2px; display: flex; gap: 3px; }
.lights i { width: 4px; height: 4px; border-radius: 50%; }
.red { background: #ee4b44; }
.amber { background: #f2b13b; }
.green { background: #3fc24c; }
.titlebar h1 { text-align: center; font: 5px/9px "Liberation Sans", sans-serif; color: #444; }
.titlebar h1 span { color: #aaa; }

.modes {
  display: flex;
  align-items: center;
  height: 11px;
  padding: 0 4px 0 5px;
  background: linear-gradient(#dcdcdc, #d3d3d3);
  border-bottom: 1px solid #bcbcbc;
}
.side svg { width: 8px; height: 8px; }
.modelist { display: flex; margin-left: 18px; gap: 2px; }
.modelist button { padding: 0 5px; height: 6px; border-radius: 2px; font-weight: bold; line-height: 6px; color: #666; }
.modelist .on { background: #898989; color: #fff; }
.layerbar { display: flex; align-items: center; gap: 4px; margin-left: auto; margin-right: 247px; }
.ring { width: 8px; height: 8px; }
.layersel { display: flex; align-items: center; width: 69px; height: 6px; background: #fff; }
.layersel i { width: 5px; height: 5px; border: 1px solid #222; }
.layersel select { flex: 1; height: 6px; text-align: center; text-align-last: center; color: #777; line-height: 6px; }

.tabs { display: flex; height: 7px; padding-left: 4px; background: #cecece; border-bottom: 1px solid #c0c0c0; }
.tabs button { padding: 0 3px; background: #dadada; border-right: 1px solid #b5b5b5; font-size: 4px; font-weight: bold; line-height: 6px; }
.tabs .on { background: #f1f1f1; color: #2e86e8; }

.tools { height: 11px; background: #eee; }
.toolrow { display: grid; grid-template-columns: repeat(32, 1fr); width: 350px; }
.toolrow button { display: grid; place-items: center; height: 11px; }
.toolrow svg, .palette svg { width: 9px; height: 9px; }

main { flex: 1; min-height: 0; display: grid; grid-template-columns: 61px 1fr 96px; }

.left { display: flex; flex-direction: column; border-right: 1px solid #c6c6c6; background: #ededed; min-height: 0; }
.command { height: 8px; margin: 13px 3px 3px 4px; padding: 0 1px; background: #fff; }
.command::placeholder { color: #d0d0d0; opacity: 1; }
.palette { display: grid; grid-template-columns: repeat(5, 11px); grid-auto-rows: 11px; padding-left: 1px; }
.palette button { display: grid; place-items: center; }

.osnap { margin-top: auto; padding: 2px 0 10px 7px; border-top: 1px solid #aaa; }
.osnap label, .radios label, .checks label { display: flex; align-items: center; gap: 2px; line-height: 5px; white-space: nowrap; }
.pair, .snaps, .radios, .checks { display: grid; grid-auto-rows: 1fr; }
.pair { height: 13px; margin-bottom: 2px; }
.snaps { height: 111px; margin-bottom: 6px; }
.off, .osnap .off { color: #c4c4c4; }
[type="checkbox"], [type="radio"] { flex: none; width: 5px; height: 5px; background: #fff; border-radius: 1px; }
[type="radio"] { border-radius: 50%; }
[type="checkbox"]:disabled { background: #f3f3f3; }
[type="checkbox"]:checked { background: #2f7cf0; }
[type="checkbox"]:checked::before { content: ""; display: block; width: 1px; height: 3px; margin: 1px auto; background: #cfe1ff; }
[type="radio"]:checked { border: 2px solid #1e74ee; }

.center { display: flex; flex-direction: column; min-width: 0; min-height: 0; }
.views { display: flex; align-items: center; height: 10px; padding: 0 8px 0 3px; border-bottom: 1px solid #bdbdbd; color: #666; background: #eee; }
.views svg { width: 6px; height: 6px; margin-right: 5px; }
.views button { padding: 0 7px; border-left: 1px solid #bbb; font: 5px/6px "Liberation Sans", sans-serif; }
.views .on { color: #2f86ea; }
.views .layouts { margin-left: auto; padding: 0; border: 0; font-family: Lato, sans-serif; color: #888; }
.viewport { position: relative; flex: 1; min-height: 0; }
.scene { position: absolute; width: 100%; height: 100%; }
.badge { position: absolute; left: 0; top: 0; padding: 0 2px; background: #0c4f8d; color: #fff; font-weight: bold; line-height: 7px; }

.right { display: flex; flex-direction: column; min-height: 0; border-left: 1px solid #c2c2c2; background: #ededed; }
.props { position: relative; height: 214px; overflow: hidden; }
.phead { position: relative; display: flex; flex-direction: column; align-items: center; height: 22px; background: linear-gradient(#f8f8f8, #e6e6e6); }
.phead h2 { line-height: 10px; }
.gear { position: absolute; right: 1px; top: 2px; }
.gear svg { width: 10px; height: 6px; }
.low { right: 10px; top: auto; bottom: 1px; }
.picons { display: flex; gap: 2px; }
.picons svg { width: 9px; height: 9px; }
.props .bar { position: absolute; right: 1px; top: 22px; width: 2px; height: 184px; border-radius: 1px; background: #bdbdbd; }

.scroll fieldset { margin: 0 7px 0 2px; padding-bottom: 3px; border-bottom: 1px solid #d5d5d5; }
.scroll .first { padding-top: 2px; }
.scroll h3 { line-height: 8px; }
.row { display: grid; grid-template-columns: 31px 22px; gap: 3px; align-items: center; height: 10px; }
.row span { text-align: right; }
.row input { width: 100%; height: 6px; padding: 0 1px; background: #fff; }
.row.short { grid-template-columns: 16px 60px; height: 9px; gap: 4px; }
.short b { font-weight: 500; }
.radios { height: 20px; padding-left: 8px; }
.choose { display: flex; align-items: center; gap: 5px; height: 9px; padding-left: 9px; }
.choose select { width: 21px; height: 6px; line-height: 6px; }
.choose svg { width: 4px; height: 6px; }
.checks { height: 14px; padding-left: 8px; }

.repair { flex: 1; min-height: 0; display: flex; flex-direction: column; padding-bottom: 3px; border-top: 1px solid #aaa; }
.repair .phead { flex: none; height: 24px; }
.report { position: relative; flex: 1; min-height: 0; margin: 1px 3px 3px; background: #fff; }
.report textarea { display: block; width: 100%; height: 100%; resize: none; overflow: hidden; white-space: pre; padding-left: 1px; color: #222; line-height: 5px; }
.report .bar { position: absolute; right: 1px; top: 1px; width: 2px; height: 96px; border-radius: 1px; background: #c4c4c4; }
.actions { display: flex; gap: 2px; padding-left: 3px; }
.actions button, .next { height: 6px; padding: 0 3px; background: #fff; border-radius: 1px; line-height: 6px; }
.next { align-self: flex-end; width: 28px; margin: 4px 3px 0 0; }

footer { display: flex; gap: 2px; height: 14px; padding: 3px 51px 0 2px; line-height: 5px; background: #d6d6d6; border-top: 1px solid #ddd; }
footer svg { width: 5px; height: 5px; }
.coords { display: flex; margin-left: auto; }
.coords select { width: 24px; height: 6px; margin: 0 6px; padding: 0 2px; border: 1px solid #c0c0c0; border-radius: 1px; line-height: 4px; }
.x { width: 30px; }
.y { width: 31px; }
```
